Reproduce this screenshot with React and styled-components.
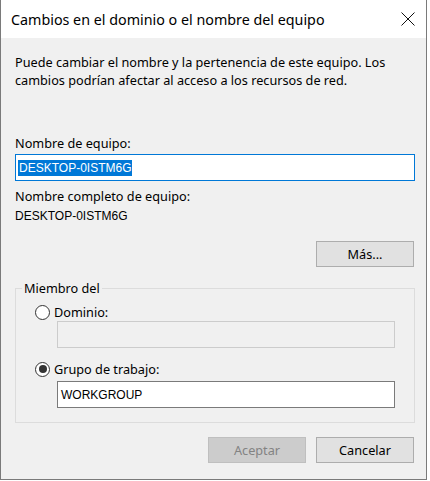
import React from "react";
import styled, { createGlobalStyle } from "styled-components";

const GlobalStyle = createGlobalStyle`
  * { box-sizing: border-box; }
  body {
    margin: 0;
    background: #ffffff;
    font-family: "Noto Sans", "Liberation Sans", sans-serif;
    color: #000;
  }
`;

const App = () => {
  return (
    <>
      <GlobalStyle />
      <Window>
        <TitleBar>
          <Title>Cambios en el dominio o el nombre del equipo</Title>
          <CloseButton aria-label="Cerrar">
            <svg width="14" height="14" viewBox="0 0 14 14">
              <path d="M0.5 0.5 L13.5 13.5 M13.5 0.5 L0.5 13.5" stroke="#111" strokeWidth="1" fill="none" />
            </svg>
          </CloseButton>
        </TitleBar>
        <Body>
          <Intro>
            Puede cambiar el nombre y la pertenencia de este equipo. Los
            <br />
            cambios podrían afectar al acceso a los recursos de red.
          </Intro>

          <Label $top={46}>Nombre de equipo:</Label>
          <TextInput $focused>
            <Selected>DESKTOP-0ISTM6G</Selected>
          </TextInput>

          <Label $top={7}>Nombre completo de equipo:</Label>
          <Value>DESKTOP-0ISTM6G</Value>

          <ButtonRow $top={17}>
            <Button>Más...</Button>
          </ButtonRow>

          <Group>
            <Legend>Miembro del</Legend>
            <GroupInner>
              <RadioRow $top={8}>
                <Radio />
                <span>Dominio:</span>
              </RadioRow>
              <Field $top={1} $disabled />
              <RadioRow $top={13}>
                <Radio $checked />
                <span>Grupo de trabajo:</span>
              </RadioRow>
              <Field $top={4}>WORKGROUP</Field>
            </GroupInner>
          </Group>

          <ButtonRow $top={14}>
            <Button $disabled>Aceptar</Button>
            <Button>Cancelar</Button>
          </ButtonRow>
        </Body>
      </Window>
    </>
  );
};

const Window = styled.div`
  width: 427px;
  height: 480px;
  border: 1px solid #7a7a7a;
  border-top: none;
  background: #f0f0f0;
  display: flex;
  flex-direction: column;
`;

const TitleBar = styled.div`
  height: 38px;
  background: #ffffff;
  display: flex;
  align-items: center;
  justify-content: space-between;
  padding-left: 10px;
`;

const Title = styled.div`
  font-size: 14.3px;
  color: #000;
  white-space: nowrap;
`;

const CloseButton = styled.div`
  width: 46px;
  height: 38px;
  display: flex;
  align-items: center;
  justify-content: center;
  margin-right: -5px;
`;

const Body = styled.div`
  flex: 1;
  padding: 15px 10px 0 14px;
  font-size: 12.7px;
  display: flex;
  flex-direction: column;
`;

const Intro = styled.p`
  margin: 0;
  line-height: 18px;
  white-space: nowrap;
`;

const Label = styled.div`
  margin-top: ${(p) => p.$top}px;
  line-height: 16px;
`;

const TextInput = styled.div`
  margin-top: 3px;
  height: 27px;
  width: 400px;
  background: #fff;
  border: 1px solid ${(p) => (p.$focused ? "#0078d7" : "#7a7a7a")};
  padding: 2px 2px;
  display: flex;
  align-items: center;
  font-family: "Liberation Sans", Arial, sans-serif;
  font-size: 12px;
`;

const Selected = styled.span`
  background: #0078d7;
  color: #fff;
  line-height: 16px;
  padding: 0 1px 0 1px;
`;

const Value = styled.div`
  margin-top: 4px;
  line-height: 16px;
  font-family: "Liberation Sans", Arial, sans-serif;
  font-size: 12px;
`;

const ButtonRow = styled.div`
  margin-top: ${(p) => p.$top}px;
  display: flex;
  justify-content: flex-end;
  gap: 10px;
  padding-right: 2px;
`;

const Button = styled.div`
  width: 98px;
  height: 26px;
  display: flex;
  align-items: center;
  justify-content: center;
  background: ${(p) => (p.$disabled ? "#cccccc" : "#e1e1e1")};
  border: 1px solid ${(p) => (p.$disabled ? "#bfbfbf" : "#adadad")};
  color: ${(p) => (p.$disabled ? "#838383" : "#000")};
  font-size: 12.7px;
`;

const Group = styled.fieldset`
  margin: 13px 0 0 0;
  padding: 0;
  width: 400px;
  border: 1px solid #dcdcdc;
  min-width: 0;
`;

const Legend = styled.legend`
  margin-left: 6px;
  padding: 0 2px;
  line-height: 16px;
  font-size: 12.7px;
`;

const GroupInner = styled.div`
  padding: 0 0 14px 19px;
  display: flex;
  flex-direction: column;
`;

const RadioRow = styled.div`
  margin-top: ${(p) => p.$top}px;
  display: flex;
  align-items: center;
  gap: 4px;
  line-height: 16px;
`;

const Radio = styled.span`
  width: 15px;
  height: 15px;
  border-radius: 50%;
  border: 1px solid #333;
  background: #fff;
  display: flex;
  align-items: center;
  justify-content: center;
  &::after {
    content: "";
    width: 8px;
    height: 8px;
    border-radius: 50%;
    background: ${(p) => (p.$checked ? "#333" : "transparent")};
  }
`;

const Field = styled.div`
  margin-top: ${(p) => p.$top}px;
  margin-left: 22px;
  width: 338px;
  height: 27px;
  background: ${(p) => (p.$disabled ? "#f0f0f0" : "#fff")};
  border: 1px solid ${(p) => (p.$disabled ? "#cccccc" : "#7a7a7a")};
  padding: 0 3px;
  display: flex;
  align-items: center;
  font-family: "Liberation Sans", Arial, sans-serif;
  font-size: 12px;
`;

export default App;
